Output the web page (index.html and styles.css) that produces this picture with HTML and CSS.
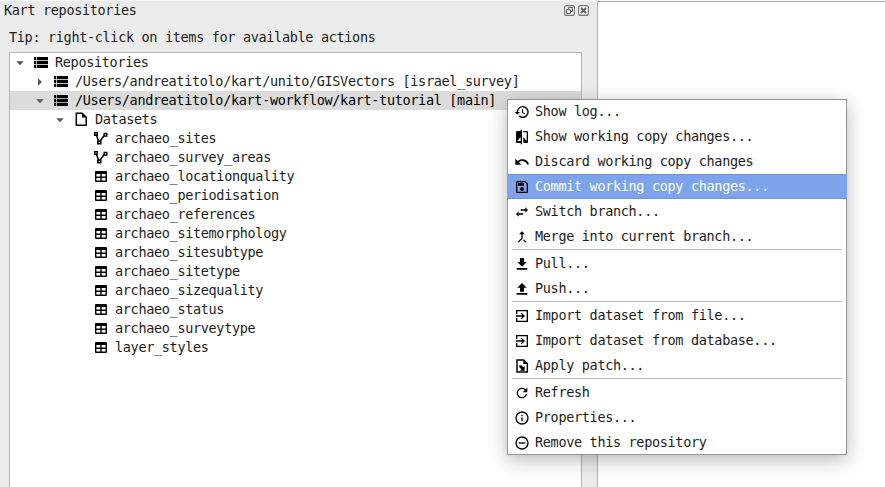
FILE: index.html
```
<!DOCTYPE html>
<html lang="en">
<head>
<meta charset="utf-8">
<title>Kart repositories</title>
<link rel="stylesheet" href="styles.css">
</head>
<body>
<svg class="defs" width="0" height="0" aria-hidden="true">
  <symbol id="down" viewBox="0 0 8 8"><path fill="#555" d="M.3 2.300h7.400L4 6.300z"/></symbol>
  <symbol id="right" viewBox="0 0 8 8"><path fill="#555" d="M2 .2v7.600l4-3.800z"/></symbol>
  <symbol id="list" viewBox="0 0 16 16"><path d="M1 3h2.300v3.200H1zM4 3h11v3.200H4zM1 6.900h2.300v3.200H1zM4 6.900h11v3.200H4zM1 10.800h2.300V14H1zM4 10.800h11V14H4z"/></symbol>
  <symbol id="file" viewBox="0 0 16 16"><path fill="none" stroke="#000" stroke-width="1.500" d="M3.300 2.200h6l3.900 4v8H3.300z"/><path d="M9 2v4.600h4.500z"/></symbol>
  <symbol id="vector" viewBox="0 0 16 16"><path fill="none" stroke="#000" stroke-width="1.500" d="M3 4l3 8.500 6-8"/><path d="M1 2h4v4H1zM4 10.500h4.500v4H4zM10.500 2.800h4v4h-4z"/><path fill="#fff" d="M2.400 3.400h1.200v1.200H2.400zM5.600 11.900h1.200v1.200H5.600zM11.900 4.200h1.200v1.200h-1.200z"/></symbol>
  <symbol id="table" viewBox="0 0 16 16"><path fill-rule="evenodd" d="M3 3h10q1 0 1 1v9q0 1-1 1H3q-1 0-1-1V4q0-1 1-1zM3.400 6v2.600h3.900V6zM8.700 6v2.600h3.900V6zM3.400 10v2.600h3.900V10zM8.700 10v2.600h3.900V10z"/></symbol>
  <symbol id="history" viewBox="0 0 24 24"><path d="M13 3a9 9 0 0 0-9 9H1l3.890 3.890.07.14L9 12H6a7 7 0 1 1 2.060 4.940l-1.420 1.420A9 9 0 1 0 13 3zm-1 5v5l4.280 2.540.72-1.210-3.500-2.080V8z"/></symbol>
  <symbol id="compare" viewBox="0 0 24 24"><path d="M10 3H5a2 2 0 0 0-2 2v14c0 1.100.9 2 2 2h5v2h2V1h-2zm0 15H5l5-6zm9-15h-5v2h5v13l-5-6v9h5a2 2 0 0 0 2-2V5a2 2 0 0 0-2-2z"/></symbol>
  <symbol id="undo" viewBox="0 0 24 24"><path d="M12.500 8c-2.650 0-5.050.99-6.900 2.600L2 7v9h9l-3.620-3.620A8 8 0 0 1 20.100 16l2.370-.78A10.500 10.500 0 0 0 12.500 8z"/></symbol>
  <symbol id="save" viewBox="0 0 24 24"><path d="M17 3H5a2 2 0 0 0-2 2v14c0 1.100.9 2 2 2h14a2 2 0 0 0 2-2V7zm2 16H5V5h11.170L19 7.830zM12 12a3 3 0 1 0 0 6 3 3 0 0 0 0-6zM6 6h9v4H6z"/></symbol>
  <symbol id="switch" viewBox="0 0 24 24"><path d="M6.990 11L3 15l3.990 4v-3H14v-2H6.990zM21 9l-3.990-4v3H10v2h7.010v3z"/></symbol>
  <symbol id="merge" viewBox="0 0 24 24"><path d="M17 20.410L18.410 19 15 15.590 13.590 17zM7.500 8H11v5.590L5.590 19 7 20.410l6-6V8h3.500L12 3.500z"/></symbol>
  <symbol id="pull" viewBox="0 0 24 24"><path d="M19 9h-4V3H9v6H5l7 7zM4 18v2.500h16V18z"/></symbol>
  <symbol id="push" viewBox="0 0 24 24"><path d="M9 16h6v-6h4l-7-7-7 7h4zM4 18h16v2.500H4z"/></symbol>
  <symbol id="import" viewBox="0 0 24 24"><path fill="none" stroke="#000" stroke-width="2" d="M4 9V4h16v16H4v-5"/><path d="M11.500 17l5-5-5-5-1.400 1.400 2.600 2.600H3v2h9.700l-2.600 2.600z"/></symbol>
  <symbol id="patch" viewBox="0 0 24 24"><path fill="none" stroke="#000" stroke-width="2.200" d="M4.500 3h10L20 8.500V21H4.500z"/><path d="M14 3v6h6zM8 11l3 0 3 3 2-2v7H9l2-2-3-3z"/></symbol>
  <symbol id="refresh" viewBox="0 0 24 24"><path d="M17.650 6.350A8 8 0 1 0 19.730 14h-2.080A6 6 0 1 1 12 6c1.660 0 3.140.69 4.220 1.780L13 11h7V4z"/></symbol>
  <symbol id="info" viewBox="0 0 24 24"><path d="M11 7h2v2h-2zm0 4h2v6h-2z"/><circle cx="12" cy="12" r="9" fill="none" stroke="#000" stroke-width="2"/></symbol>
  <symbol id="remove" viewBox="0 0 24 24"><path d="M7 11h10v2H7z"/><circle cx="12" cy="12" r="9" fill="none" stroke="#000" stroke-width="2"/></symbol>
</svg>
<div class="window">
  <section class="dock">
    <header class="titlebar">
      <span>Kart repositories</span>
      <svg class="winbtn" viewBox="0 0 11 11"><rect class="frame" x=".6" y=".6" width="9.800" height="9.800" rx="2"/><path class="glyph" d="M4.500 4.500V2.500h4v4h-2M2.500 4.500h4v4h-4z"/></svg>
      <svg class="winbtn" viewBox="0 0 11 11"><rect class="frame" x=".6" y=".6" width="9.800" height="9.800" rx="2"/><path class="glyph cross" d="M3 3l5 5M8 3L3 8"/></svg>
    </header>
    <p class="tip">Tip: right-click on items for available actions</p>
    <div class="tree">
      <div class="row l0"><svg class="arrow"><use href="#down"/></svg><svg class="icon"><use href="#list"/></svg><span>Repositories</span></div>
      <div class="row l1"><svg class="arrow"><use href="#right"/></svg><svg class="icon"><use href="#list"/></svg><span>/Users/andreatitolo/kart/unito/GISVectors [israel_survey]</span></div>
      <div class="row l1 selected"><svg class="arrow"><use href="#down"/></svg><svg class="icon"><use href="#list"/></svg><span>/Users/andreatitolo/kart-workflow/kart-tutorial [main]</span></div>
      <div class="row l2"><svg class="arrow"><use href="#down"/></svg><svg class="icon"><use href="#file"/></svg><span>Datasets</span></div>
      <div class="row l3"><svg class="icon"><use href="#vector"/></svg><span>archaeo_sites</span></div>
      <div class="row l3"><svg class="icon"><use href="#vector"/></svg><span>archaeo_survey_areas</span></div>
      <div class="row l3"><svg class="icon"><use href="#table"/></svg><span>archaeo_locationquality</span></div>
      <div class="row l3"><svg class="icon"><use href="#table"/></svg><span>archaeo_periodisation</span></div>
      <div class="row l3"><svg class="icon"><use href="#table"/></svg><span>archaeo_references</span></div>
      <div class="row l3"><svg class="icon"><use href="#table"/></svg><span>archaeo_sitemorphology</span></div>
      <div class="row l3"><svg class="icon"><use href="#table"/></svg><span>archaeo_sitesubtype</span></div>
      <div class="row l3"><svg class="icon"><use href="#table"/></svg><span>archaeo_sitetype</span></div>
      <div class="row l3"><svg class="icon"><use href="#table"/></svg><span>archaeo_sizequality</span></div>
      <div class="row l3"><svg class="icon"><use href="#table"/></svg><span>archaeo_status</span></div>
      <div class="row l3"><svg class="icon"><use href="#table"/></svg><span>archaeo_surveytype</span></div>
      <div class="row l3"><svg class="icon"><use href="#table"/></svg><span>layer_styles</span></div>
    </div>
  </section>
  <main class="canvas"></main>
</div>
<div class="menu">
  <div class="item"><svg class="icon"><use href="#history"/></svg><span>Show log...</span></div>
  <div class="item"><svg class="icon"><use href="#compare"/></svg><span>Show working copy changes...</span></div>
  <div class="item"><svg class="icon"><use href="#undo"/></svg><span>Discard working copy changes</span></div>
  <div class="item active"><svg class="icon"><use href="#save"/></svg><span>Commit working copy changes...</span></div>
  <div class="item"><svg class="icon"><use href="#switch"/></svg><span>Switch branch...</span></div>
  <div class="item"><svg class="icon"><use href="#merge"/></svg><span>Merge into current branch...</span></div>
  <div class="separator"></div>
  <div class="item"><svg class="icon"><use href="#pull"/></svg><span>Pull...</span></div>
  <div class="item"><svg class="icon"><use href="#push"/></svg><span>Push...</span></div>
  <div class="separator"></div>
  <div class="item"><svg class="icon"><use href="#import"/></svg><span>Import dataset from file...</span></div>
  <div class="item"><svg class="icon"><use href="#import"/></svg><span>Import dataset from database...</span></div>
  <div class="item"><svg class="icon"><use href="#patch"/></svg><span>Apply patch...</span></div>
  <div class="separator"></div>
  <div class="item"><svg class="icon"><use href="#refresh"/></svg><span>Refresh</span></div>
  <div class="item"><svg class="icon"><use href="#info"/></svg><span>Properties...</span></div>
  <div class="item"><svg class="icon"><use href="#remove"/></svg><span>Remove this repository</span></div>
</div>
</body>
</html>
```
FILE: styles.css
```
* { box-sizing: border-box; }
body {
  margin: 0;
  height: 487px;
  overflow: hidden;
  background: #ebebeb;
  color: #1c1c1c;
  font: 13.5px/19px "DejaVu Sans Mono", monospace;
  letter-spacing: -0.33px;
}
.defs { position: absolute; }
.window { display: flex; height: 487px; border-top: 1px solid #f4f4f4; }
.dock { width: 597px; display: flex; flex-direction: column; }
.titlebar { display: flex; align-items: center; height: 19px; padding: 0 8px 0 4px; }
.titlebar span { margin-right: auto; }
.winbtn { width: 11px; height: 11px; margin-left: 3px; }
.frame { fill: #f4f4f0; stroke: #777772; stroke-width: 1.1; }
.glyph { fill: none; stroke: #666661; stroke-width: 1; }
.cross { stroke-width: 2; }
.tip { margin: 8px 0 5px 9px; }
.tree {
  flex: 1;
  width: 573px;
  margin-left: 9px;
  border: 1px solid #b3b3b3;
  border-bottom: 0;
  background: #fff;
}
.row { display: flex; align-items: center; height: 19px; white-space: nowrap; }
.l0 { padding-left: 6px; }
.l1 { padding-left: 26px; }
.l2 { padding-left: 46px; }
.l3 { padding-left: 83px; }
.selected { background: #dcdcdc; color: #000; }
.arrow { width: 8px; height: 8px; margin-right: 9px; }
.row .icon { width: 16px; height: 16px; margin-right: 6px; position: relative; top: -.5px; }
.canvas { flex: 1; border: 1px solid #b3b3b3; border-width: 1px 0 0 1px; background: #fff; }
.menu {
  position: absolute;
  left: 507px;
  top: 99px;
  width: 340px;
  height: 356px;
  background: #fff;
  box-shadow: inset 0 0 0 1px #949494, 0 5px 18px rgba(0, 0, 0, .28);
}
.item { display: flex; align-items: center; height: 25px; padding-left: 7px; white-space: nowrap; }
.item .icon { width: 16px; height: 16px; margin-right: 5px; position: relative; top: .5px; }
.active {
  background: #7da4eb;
  color: #fff;
  border: solid #6d93d6;
  border-width: 1px 0;
}
.separator { height: 2px; margin: 0 5px; border-top: 1px solid #bdbdbd; }
```
